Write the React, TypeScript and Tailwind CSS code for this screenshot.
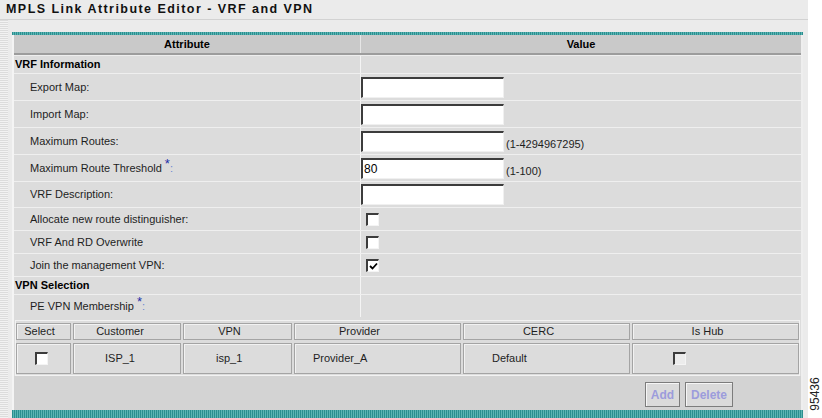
import React from "react";

function Box({ checked = false, dim = false }: { checked?: boolean; dim?: boolean }) {
  return (
    <div
      className={
        "relative w-[13px] h-[13px] border-t-2 border-l-2 border-t-[#3c3c3c] border-l-[#3c3c3c] border-r border-b border-r-[#f4f4f4] border-b-[#f4f4f4] " +
        (dim ? "bg-[#ececec]" : "bg-white")
      }
    >
      {checked && (
        <svg className="absolute left-[1px] top-[1px]" width="9" height="9" viewBox="0 0 9 9">
          <path d="M1 4 L3.5 6.5 L8 1.5" stroke="#000" strokeWidth="1.8" fill="none" />
        </svg>
      )}
    </div>
  );
}

function TextInput({ value = "" }: { value?: string }) {
  return (
    <div className="w-[143px] h-[21px] bg-white border-t-2 border-l-2 border-t-[#3c3c3c] border-l-[#3c3c3c] border-r border-b border-r-[#f0f0f0] border-b-[#f0f0f0] flex items-center pl-[1px] text-[12px] text-black">
      {value}
    </div>
  );
}

function Star() {
  return (
    <>
      <span className="text-[#1c2fa8] text-[13px] relative -top-[4px] ml-[3px]">*</span>
      <span className="text-[#6a86d0]">:</span>
    </>
  );
}

function Row({
  hClass,
  left,
  right,
  bold = false,
}: {
  hClass: string;
  left: React.ReactNode;
  right?: React.ReactNode;
  bold?: boolean;
}) {
  return (
    <div className={"flex border-b border-b-[#efefef] " + hClass}>
      <div
        className={
          "w-[346px] flex items-center " +
          (bold ? "pl-[1px] font-bold text-black" : "pl-[16px] text-[#1e1e1e]")
        }
      >
        {left}
      </div>
      <div className="flex-1 border-l border-l-[#f4f4f4] flex items-center">{right}</div>
    </div>
  );
}

function Hint({ children }: { children: React.ReactNode }) {
  return <span className="self-end mb-[3px] ml-[2px] leading-[13px] text-[#1e1e1e]">{children}</span>;
}

function HCell({ children, pr }: { children: React.ReactNode; pr: string }) {
  return (
    <div
      className={
        "h-[17px] border border-[#a4a4a4] shadow-[inset_1px_1px_0_#f2f2f2] flex items-center justify-center text-[#1e1e1e] " +
        pr
      }
    >
      {children}
    </div>
  );
}

function DCell({ children, pl }: { children: React.ReactNode; pl: string }) {
  return (
    <div
      className={
        "h-[31px] border border-[#a4a4a4] shadow-[inset_1px_1px_0_#f2f2f2] flex items-center text-[#1e1e1e] " +
        pl
      }
    >
      {children}
    </div>
  );
}

export default function App() {
  return (
    <div className="w-[822px] h-[418px] overflow-hidden bg-white flex font-['Liberation_Sans',Arial,sans-serif] text-[11px]">
      <div className="w-[808px] h-[418px] bg-[#ebebeb] flex flex-col">
        <div className="h-[19px] flex items-center pl-[6px] text-[12.5px] font-bold tracking-[1.45px] text-[#111] border-b border-b-[#d2d2d2] box-content">
          MPLS Link Attribute Editor - VRF and VPN
        </div>
        <div className="flex flex-1">
          <div className="w-[8px] [background:repeating-linear-gradient(to_bottom,#dcdcdc_0px,#dcdcdc_1px,#f2f2f2_1px,#f2f2f2_2px)]" />
          <div className="ml-[4px] mt-[12px] w-[791px] flex flex-col">
            <div className="h-[3px] [background:repeating-linear-gradient(to_right,#2b8f8f_0px,#2b8f8f_1px,#5cb4b4_1px,#5cb4b4_2px)]" />
            <div className="flex-1 flex flex-col bg-[#dcdcdc] border-l-2 border-r-2 border-l-[#f4f4f4] border-r-[#eeeeee]">
              <div className="flex h-[18px] bg-[#c9c9c9] font-bold text-black">
                <div className="w-[346px] flex items-center justify-center">Attribute</div>
                <div className="flex-1 border-l border-l-[#e6e6e6] flex items-center justify-center">Value</div>
              </div>
              <div className="h-[2px] bg-[#9c9c9c]" />
              <div className="h-[1px] bg-[#eeeeee]" />
              <Row hClass="h-[18px]" bold left="VRF Information" />
              <Row hClass="h-[27px]" left="Export Map:" right={<TextInput />} />
              <Row hClass="h-[27px]" left="Import Map:" right={<TextInput />} />
              <Row
                hClass="h-[27px]"
                left="Maximum Routes:"
                right={
                  <>
                    <TextInput />
                    <Hint>(1-4294967295)</Hint>
                  </>
                }
              />
              <Row
                hClass="h-[27px]"
                left={
                  <span>
                    Maximum Route Threshold
                    <Star />
                  </span>
                }
                right={
                  <>
                    <TextInput value="80" />
                    <Hint>(1-100)</Hint>
                  </>
                }
              />
              <Row hClass="h-[26px]" left="VRF Description:" right={<TextInput />} />
              <Row
                hClass="h-[23px]"
                left="Allocate new route distinguisher:"
                right={
                  <div className="pl-[5px]">
                    <Box />
                  </div>
                }
              />
              <Row
                hClass="h-[23px]"
                left="VRF And RD Overwrite"
                right={
                  <div className="pl-[5px]">
                    <Box />
                  </div>
                }
              />
              <Row
                hClass="h-[23px]"
                left="Join the management VPN:"
                right={
                  <div className="pl-[5px]">
                    <Box checked />
                  </div>
                }
              />
              <Row hClass="h-[18px]" bold left="VPN Selection" />
              <div className="flex h-[22px]">
                <div className="w-[346px] flex items-center pl-[16px] text-[#1e1e1e]">
                  <span>
                    PE VPN Membership
                    <Star />
                  </span>
                </div>
                <div className="flex-1 border-l border-l-[#f4f4f4]" />
              </div>
              <div className="pt-[3px] pl-[1px]">
                <div className="w-[785px] border border-[#f2f2f2] pt-[2px] pb-[1px]">
                  <div className="grid grid-cols-[55px_108px_109px_167px_167px_167px] gap-x-[2px] gap-y-[3px]">
                    <HCell pr="pr-[8px]">Select</HCell>
                    <HCell pr="pr-[14px]">Customer</HCell>
                    <HCell pr="pr-[16px]">VPN</HCell>
                    <HCell pr="pr-[36px]">Provider</HCell>
                    <HCell pr="pr-[16px]">CERC</HCell>
                    <HCell pr="pr-[16px]">Is Hub</HCell>
                    <DCell pl="pl-[18px]">
                      <Box />
                    </DCell>
                    <DCell pl="pl-[31px]">ISP_1</DCell>
                    <DCell pl="pl-[32px]">isp_1</DCell>
                    <DCell pl="pl-[18px]">Provider_A</DCell>
                    <DCell pl="pl-[28px]">Default</DCell>
                    <DCell pl="pl-[40px]">
                      <Box dim />
                    </DCell>
                  </div>
                </div>
              </div>
              <div className="flex-1 bg-[#d3d3d3] flex justify-end items-start pt-[6px] pr-[68px] gap-[5px]">
                <div className="h-[25px] w-[35px] bg-[#dadada] border border-[#7c7c7c] shadow-[inset_1px_1px_0_#f6f6f6] flex items-center justify-center font-bold text-[12px] text-[#9c9cdc]">
                  Add
                </div>
                <div className="h-[25px] w-[48px] bg-[#dadada] border border-[#7c7c7c] shadow-[inset_1px_1px_0_#f6f6f6] flex items-center justify-center font-bold text-[12px] text-[#9c9cdc]">
                  Delete
                </div>
              </div>
              <div className="h-[8px] -mx-[2px] [background:repeating-linear-gradient(to_right,#2b8f8f_0px,#2b8f8f_1px,#5cb4b4_1px,#5cb4b4_2px)]" />
            </div>
          </div>
        </div>
      </div>
      <div className="w-[14px] h-[418px] relative">
        <div className="absolute left-[7px] top-[394px] -translate-x-1/2 -translate-y-1/2 -rotate-90 text-[12px] text-[#222] whitespace-nowrap">
          95436
        </div>
      </div>
    </div>
  );
}
